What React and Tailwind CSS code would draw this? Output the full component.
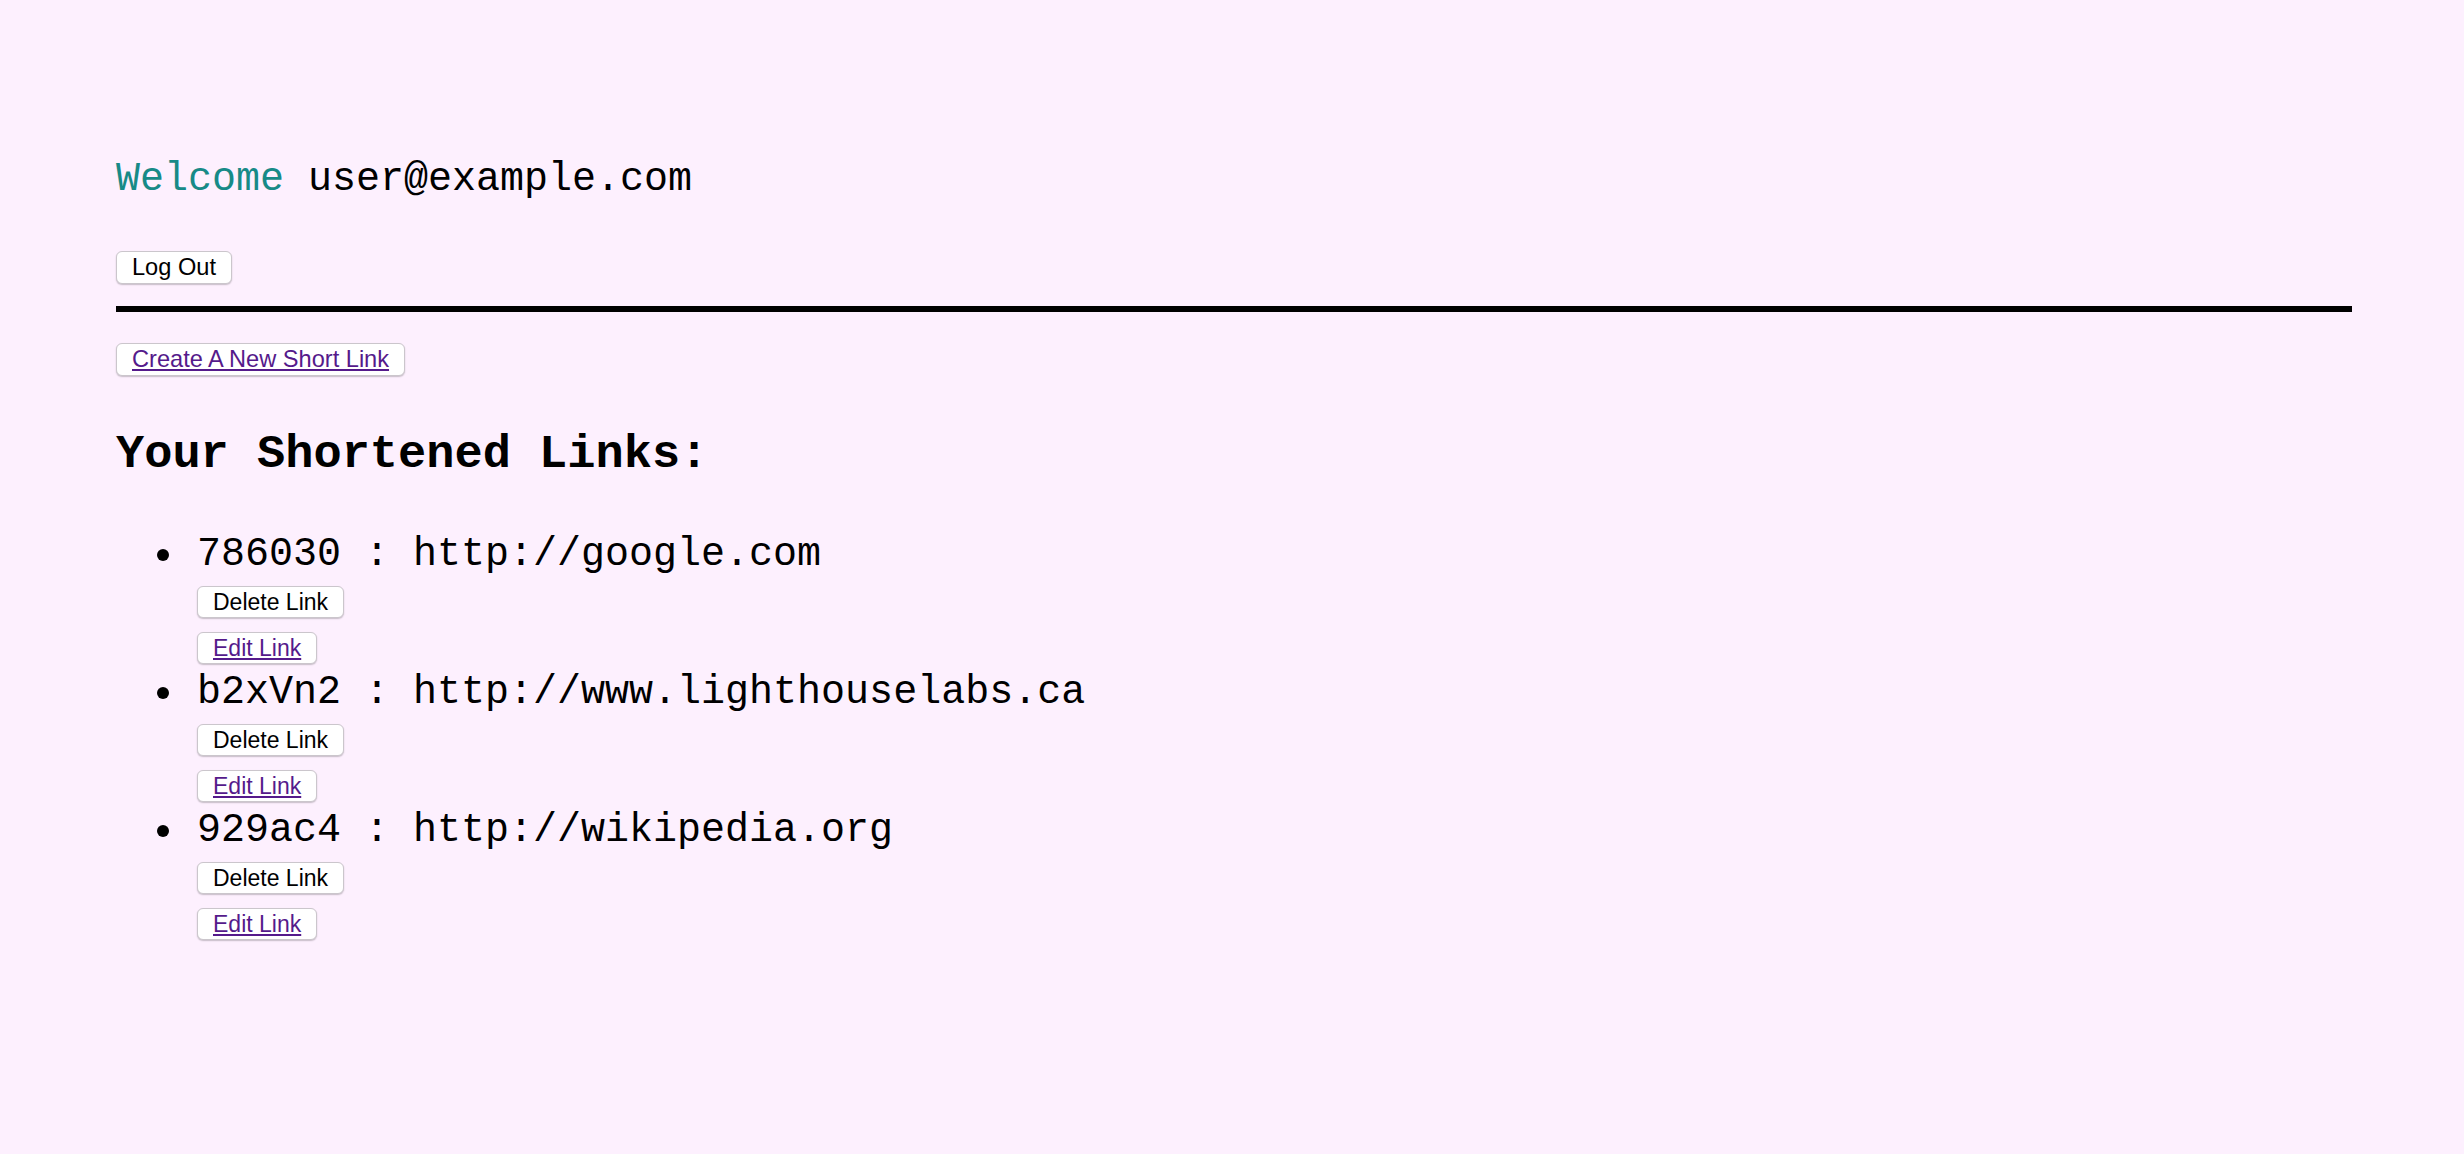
import React from 'react';

const links = [
    { id: '786030', url: 'http://google.com' },
    { id: 'b2xVn2', url: 'http://www.lighthouselabs.ca' },
    { id: '929ac4', url: 'http://wikipedia.org' },
];

const btn =
    "flex items-center px-[15px] bg-white border border-[#cbc6cc] rounded-[6px] shadow-[0_1px_1.5px_rgba(0,0,0,0.22)] font-['Liberation_Sans',Arial,sans-serif] text-black";

const App = () => {
    return (
        <div className="min-h-screen bg-[#fdf0fe] pl-[116px] pr-[112px] pt-[157px] pb-[100px] font-['Liberation_Mono','Courier_New',monospace] text-black">
            <h3 className="text-[40px] leading-[45px]">
                <span className="text-[#178a87]">Welcome</span> user@example.com
            </h3>

            <button className={`${btn} text-[23.6px] h-[33px] mt-[49px]`}>Log Out</button>

            <div className="mt-[22px] h-[6px] bg-black" />

            <button className={`${btn} text-[23.6px] h-[33px] mt-[31px]`}>
                <a href="#" className="underline text-[#551a8b]">Create A New Short Link</a>
            </button>

            <h2 className="mt-[52px] text-[47px] leading-[54px] font-bold">Your Shortened Links:</h2>

            <ul className="mt-[50px] flex flex-col gap-[6px]">
                {links.map((link) => (
                    <li key={link.id} className="flex">
                        <div className="w-[81px] h-[45px] flex items-center pl-[41px]">
                            <div className="w-[12px] h-[12px] rounded-full bg-black" />
                        </div>
                        <div className="flex flex-col items-start">
                            <div className="text-[40px] leading-[45px] whitespace-pre">
                                {link.id} : {link.url}
                            </div>
                            <button className={`${btn} text-[23px] h-[32px] mt-[9px]`}>Delete Link</button>
                            <button className={`${btn} text-[23px] h-[32px] mt-[14px]`}>
                                <a href="#" className="underline text-[#551a8b]">Edit Link</a>
                            </button>
                        </div>
                    </li>
                ))}
            </ul>
        </div>
    );
};

export default App;
